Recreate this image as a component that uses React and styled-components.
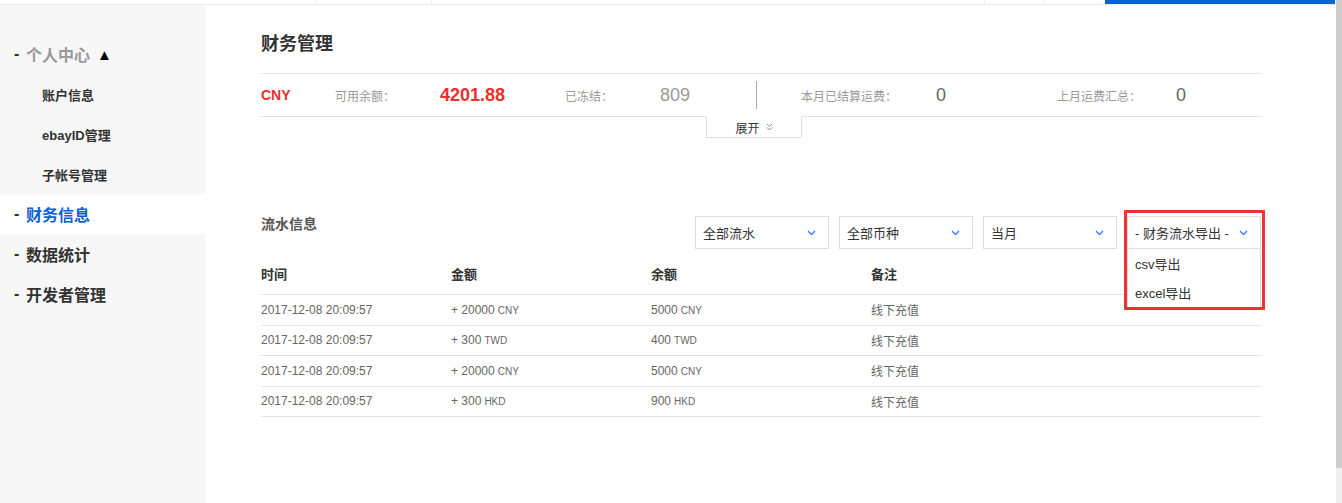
import React from 'react';
import styled, {createGlobalStyle} from 'styled-components';

const GlobalStyle = createGlobalStyle`
  html, body {
    margin: 0;
    padding: 0;
    background: #fff;
    overflow: hidden;
  }
  body {
    font-family: "Liberation Sans", "Noto Sans CJK SC", sans-serif;
    color: #333;
  }
`;

const Page = styled.div`
  height: 503px;
  padding-right: 6px;
  display: flex;
  flex-direction: column;
`;

// the window's scrollbar, drawn over the right edge
const ScrollTrack = styled.div`
  position: fixed;
  top: 0;
  right: 0;
  width: 6px;
  height: 503px;
  background: #f0f0f0;
`;

const ScrollThumb = styled.div`
  width: 6px;
  height: 468px;
  background: #cdcdcd;
`;

const TopStrip = styled.div`
  display: flex;
  height: 4px;
  border-bottom: 1px solid #ececec;
`;

const NavCell = styled.div`
  box-sizing: border-box;
  width: ${p => p.w}px;
  height: 4px;
  border-right: ${p => p.active ? 'none' : '1px solid #ececec'};
  background: ${p => p.active ? '#0066cc' : 'transparent'};
`;

const Body = styled.div`
  flex: 1;
  display: flex;
`;

const Sidebar = styled.aside`
  width: 206px;
  flex-shrink: 0;
  background: #f7f7f7;
  padding-top: 29px;
`;

const MenuGroup = styled.div`
  height: 40px;
  display: flex;
  align-items: center;
  padding-left: 14px;
  font-size: 16px;
  font-weight: 700;
  background: ${p => p.active ? '#fff' : 'transparent'};
  color: ${p => p.active ? '#0f5fd6' : p.muted ? '#999' : '#333'};
`;

const Dash = styled.span`
  width: 12px;
  color: #333;
`;

const Caret = styled.span`
  margin-left: 7px;
  font-size: 15px;
  color: #000;
`;

const SubItem = styled.div`
  height: 40px;
  display: flex;
  align-items: center;
  padding-left: 42px;
  font-size: 13px;
  font-weight: 700;
  color: #333;
`;

const Main = styled.main`
  flex: 1;
  padding: 27px 0 0 55px;
`;

const Content = styled.div`
  width: 1000px;
`;

const Title = styled.h1`
  margin: 0 0 17px;
  font-size: 18px;
  line-height: 24px;
  font-weight: 700;
  color: #333;
`;

const StatBar = styled.div`
  display: flex;
  align-items: center;
  height: 42px;
  border-top: 1px solid #e3e3e3;
  border-bottom: 1px solid #e3e3e3;
`;

const StatCell = styled.div`
  width: ${p => p.w ? `${p.w}px` : 'auto'};
  flex-shrink: 0;
  font-size: ${p => p.big ? 18 : 12}px;
  font-weight: ${p => p.bold ? 700 : 400};
  color: ${p => p.color || '#999'};
`;

const Currency = styled(StatCell)`
  font-size: 14px;
  font-weight: 700;
  color: #ee2d2d;
`;

const VDivider = styled.div`
  width: 1px;
  height: 28px;
  background: #aaa;
  margin-right: 44px;
`;

const ExpandTab = styled.div`
  box-sizing: border-box;
  width: 96px;
  height: 22px;
  margin: -1px 0 0 445px;
  background: #fff;
  border: 1px solid #ddd;
  border-top-color: #fff;
  display: flex;
  align-items: center;
  justify-content: center;
  gap: 6px;
  font-size: 12px;
  color: #333;
`;

const FlowSection = styled.section`
  margin-top: 78px;
`;

const FlowHeader = styled.div`
  display: flex;
  justify-content: space-between;
  align-items: flex-start;
`;

const FlowTitle = styled.div`
  font-size: 14px;
  line-height: 17px;
  font-weight: 700;
  color: #555;
`;

const Filters = styled.div`
  display: flex;
  gap: 10px;
`;

const Select = styled.div`
  box-sizing: border-box;
  width: 134px;
  height: 33px;
  border: 1px solid #ddd;
  padding: 0 12px 0 7px;
  display: flex;
  align-items: center;
  justify-content: space-between;
  font-size: 13px;
  color: #333;
  background: #fff;
`;

const ExportWrap = styled.div`
  position: relative;
`;

const Highlight = styled.div`
  position: absolute;
  top: -6px;
  left: -3px;
  right: -4px;
  height: 100px;
  box-sizing: border-box;
  border: 3px solid #ee3336;
  z-index: 3;
  pointer-events: none;
`;

const Dropdown = styled.div`
  position: absolute;
  top: 100%;
  left: 0;
  right: 0;
  background: #fff;
  border: 1px solid #ddd;
  border-top: none;
  z-index: 2;
`;

const Option = styled.div`
  height: 29px;
  padding: 0 7px;
  display: flex;
  align-items: center;
  font-size: 13px;
  color: #333;
`;

const Table = styled.div`
  margin-top: 10px;
`;

const Row = styled.div`
  box-sizing: border-box;
  display: grid;
  grid-template-columns: 190px 200px 220px 1fr;
  align-items: center;
  border-bottom: 1px solid #e3e3e3;
  height: ${p => p.head ? '36px' : '30.5px'};
  padding-bottom: ${p => p.head ? '7px' : '0'};
  font-size: ${p => p.head ? 13 : 12}px;
  font-weight: ${p => p.head ? 700 : 400};
  color: ${p => p.head ? '#333' : '#666'};
`;

const Unit = styled.span`
  font-size: 10px;
  margin-left: 3px;
`;

const Chevron = () => (
    <svg width="9" height="6" viewBox="0 0 9 6">
        <polyline points="1,1 4.5,4.5 8,1" fill="none" stroke="#3a7bd5" strokeWidth="1.3"/>
    </svg>
);

const DoubleChevron = () => (
    <svg width="7" height="8" viewBox="0 0 7 8">
        <polyline points="1,1 3.5,3.5 6,1" fill="none" stroke="#888" strokeWidth="1"/>
        <polyline points="1,4.5 3.5,7 6,4.5" fill="none" stroke="#888" strokeWidth="1"/>
    </svg>
);

const records = [
    {time: '2017-12-08 20:09:57', amount: '+ 20000', balance: '5000', cur: 'CNY', note: '线下充值'},
    {time: '2017-12-08 20:09:57', amount: '+ 300', balance: '400', cur: 'TWD', note: '线下充值'},
    {time: '2017-12-08 20:09:57', amount: '+ 20000', balance: '5000', cur: 'CNY', note: '线下充值'},
    {time: '2017-12-08 20:09:57', amount: '+ 300', balance: '900', cur: 'HKD', note: '线下充值'},
];

const navCells = [317, 115, 553, 60, 60];

const App = () => {
    return (
        <Page>
            <GlobalStyle/>
            <TopStrip>
                {navCells.map((w, i) => <NavCell key={i} w={w}/>)}
                <NavCell w={230} active/>
            </TopStrip>
            <Body>
                <Sidebar>
                    <MenuGroup muted><Dash>-</Dash>个人中心<Caret>▲</Caret></MenuGroup>
                    <SubItem>账户信息</SubItem>
                    <SubItem>ebayID管理</SubItem>
                    <SubItem>子帐号管理</SubItem>
                    <MenuGroup active><Dash>-</Dash>财务信息</MenuGroup>
                    <MenuGroup><Dash>-</Dash>数据统计</MenuGroup>
                    <MenuGroup><Dash>-</Dash>开发者管理</MenuGroup>
                </Sidebar>
                <Main>
                    <Content>
                        <Title>财务管理</Title>
                        <StatBar>
                            <Currency w={74}>CNY</Currency>
                            <StatCell w={105}>可用余额：</StatCell>
                            <StatCell w={125} big bold color="#ee2d2d">4201.88</StatCell>
                            <StatCell w={95}>已冻结：</StatCell>
                            <StatCell w={96} big>809</StatCell>
                            <VDivider/>
                            <StatCell w={135}>本月已结算运费：</StatCell>
                            <StatCell w={121} big color="#666">0</StatCell>
                            <StatCell w={119}>上月运费汇总：</StatCell>
                            <StatCell big color="#666">0</StatCell>
                        </StatBar>
                        <ExpandTab>展开 <DoubleChevron/></ExpandTab>

                        <FlowSection>
                            <FlowHeader>
                                <FlowTitle>流水信息</FlowTitle>
                                <Filters>
                                    <Select>全部流水<Chevron/></Select>
                                    <Select>全部币种<Chevron/></Select>
                                    <Select>当月<Chevron/></Select>
                                    <ExportWrap>
                                        <Select>- 财务流水导出 -<Chevron/></Select>
                                        <Dropdown>
                                            <Option>csv导出</Option>
                                            <Option>excel导出</Option>
                                        </Dropdown>
                                        <Highlight/>
                                    </ExportWrap>
                                </Filters>
                            </FlowHeader>
                            <Table>
                                <Row head>
                                    <span>时间</span>
                                    <span>金额</span>
                                    <span>余额</span>
                                    <span>备注</span>
                                </Row>
                                {records.map((r, i) => (
                                    <Row key={i}>
                                        <span>{r.time}</span>
                                        <span>{r.amount}<Unit>{r.cur}</Unit></span>
                                        <span>{r.balance}<Unit>{r.cur}</Unit></span>
                                        <span>{r.note}</span>
                                    </Row>
                                ))}
                            </Table>
                        </FlowSection>
                    </Content>
                </Main>
            </Body>
            <ScrollTrack><ScrollThumb/></ScrollTrack>
        </Page>
    );
};

export default App;
